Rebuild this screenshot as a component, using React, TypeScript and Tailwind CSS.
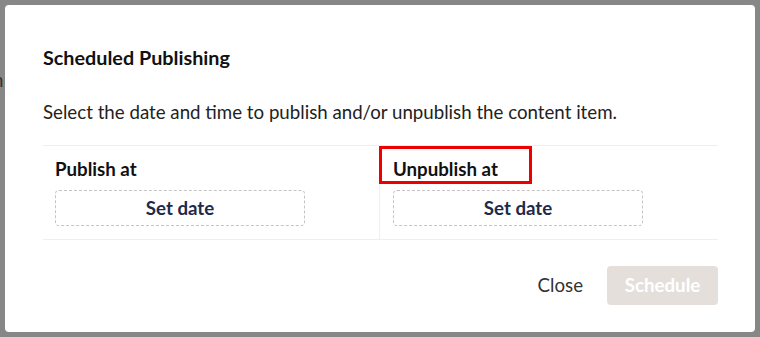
import React from 'react'

export default function App() {
  const columns = [
    { label: 'Publish at', highlighted: false },
    { label: 'Unpublish at', highlighted: true },
  ]

  return (
    <div className="relative w-[760px] h-[337px] overflow-hidden bg-[#878787] p-[5px] font-['Lato','Open_Sans',sans-serif]">
      {/* page behind the overlay */}
      <span className="absolute left-[-7px] top-[66px] text-[18.7px] text-[#333]">n</span>

      {/* Modal */}
      <div className="relative w-[750px] h-[327px] bg-white rounded-[4px] pl-[38px] pr-[37px] pt-[40px]">
        <h2 className="text-[19.8px] leading-[24px] font-bold text-[#111]">Scheduled Publishing</h2>
        <p className="mt-[31px] text-[18.7px] leading-[24px] text-[#222]">
          Select the date and time to publish and/or unpublish the content item.
        </p>

        <div className="mt-[21px] grid grid-cols-[337px_1fr] border-t border-b border-[#efefef]">
          {columns.map((col, index) => (
            <div
              key={index}
              className={`relative pt-[11px] pb-[13px] ${index === 0 ? 'pl-[12px] border-r border-[#efefef]' : 'pl-[13px]'}`}
            >
              {col.highlighted && (
                <div className="absolute left-[-1px] top-0 w-[153px] h-[38px] border-[3px] border-[#ee0000]" />
              )}
              <div className="text-[18.7px] leading-[24px] font-bold text-[#111]">{col.label}</div>
              <button className="mt-[9px] w-[250px] h-[36px] rounded-[4px] border border-dashed border-[#c4c4c4] text-[18.7px] font-bold text-[#1f2a48]">
                Set date
              </button>
            </div>
          ))}
        </div>

        <div className="mt-[26px] flex justify-end items-center gap-[24px]">
          <button className="text-[18.7px] text-[#333]">Close</button>
          <button className="w-[111px] h-[39px] rounded-[4px] bg-[#e5dfdc] text-[18.7px] font-bold text-white">
            Schedule
          </button>
        </div>
      </div>
    </div>
  )
}
